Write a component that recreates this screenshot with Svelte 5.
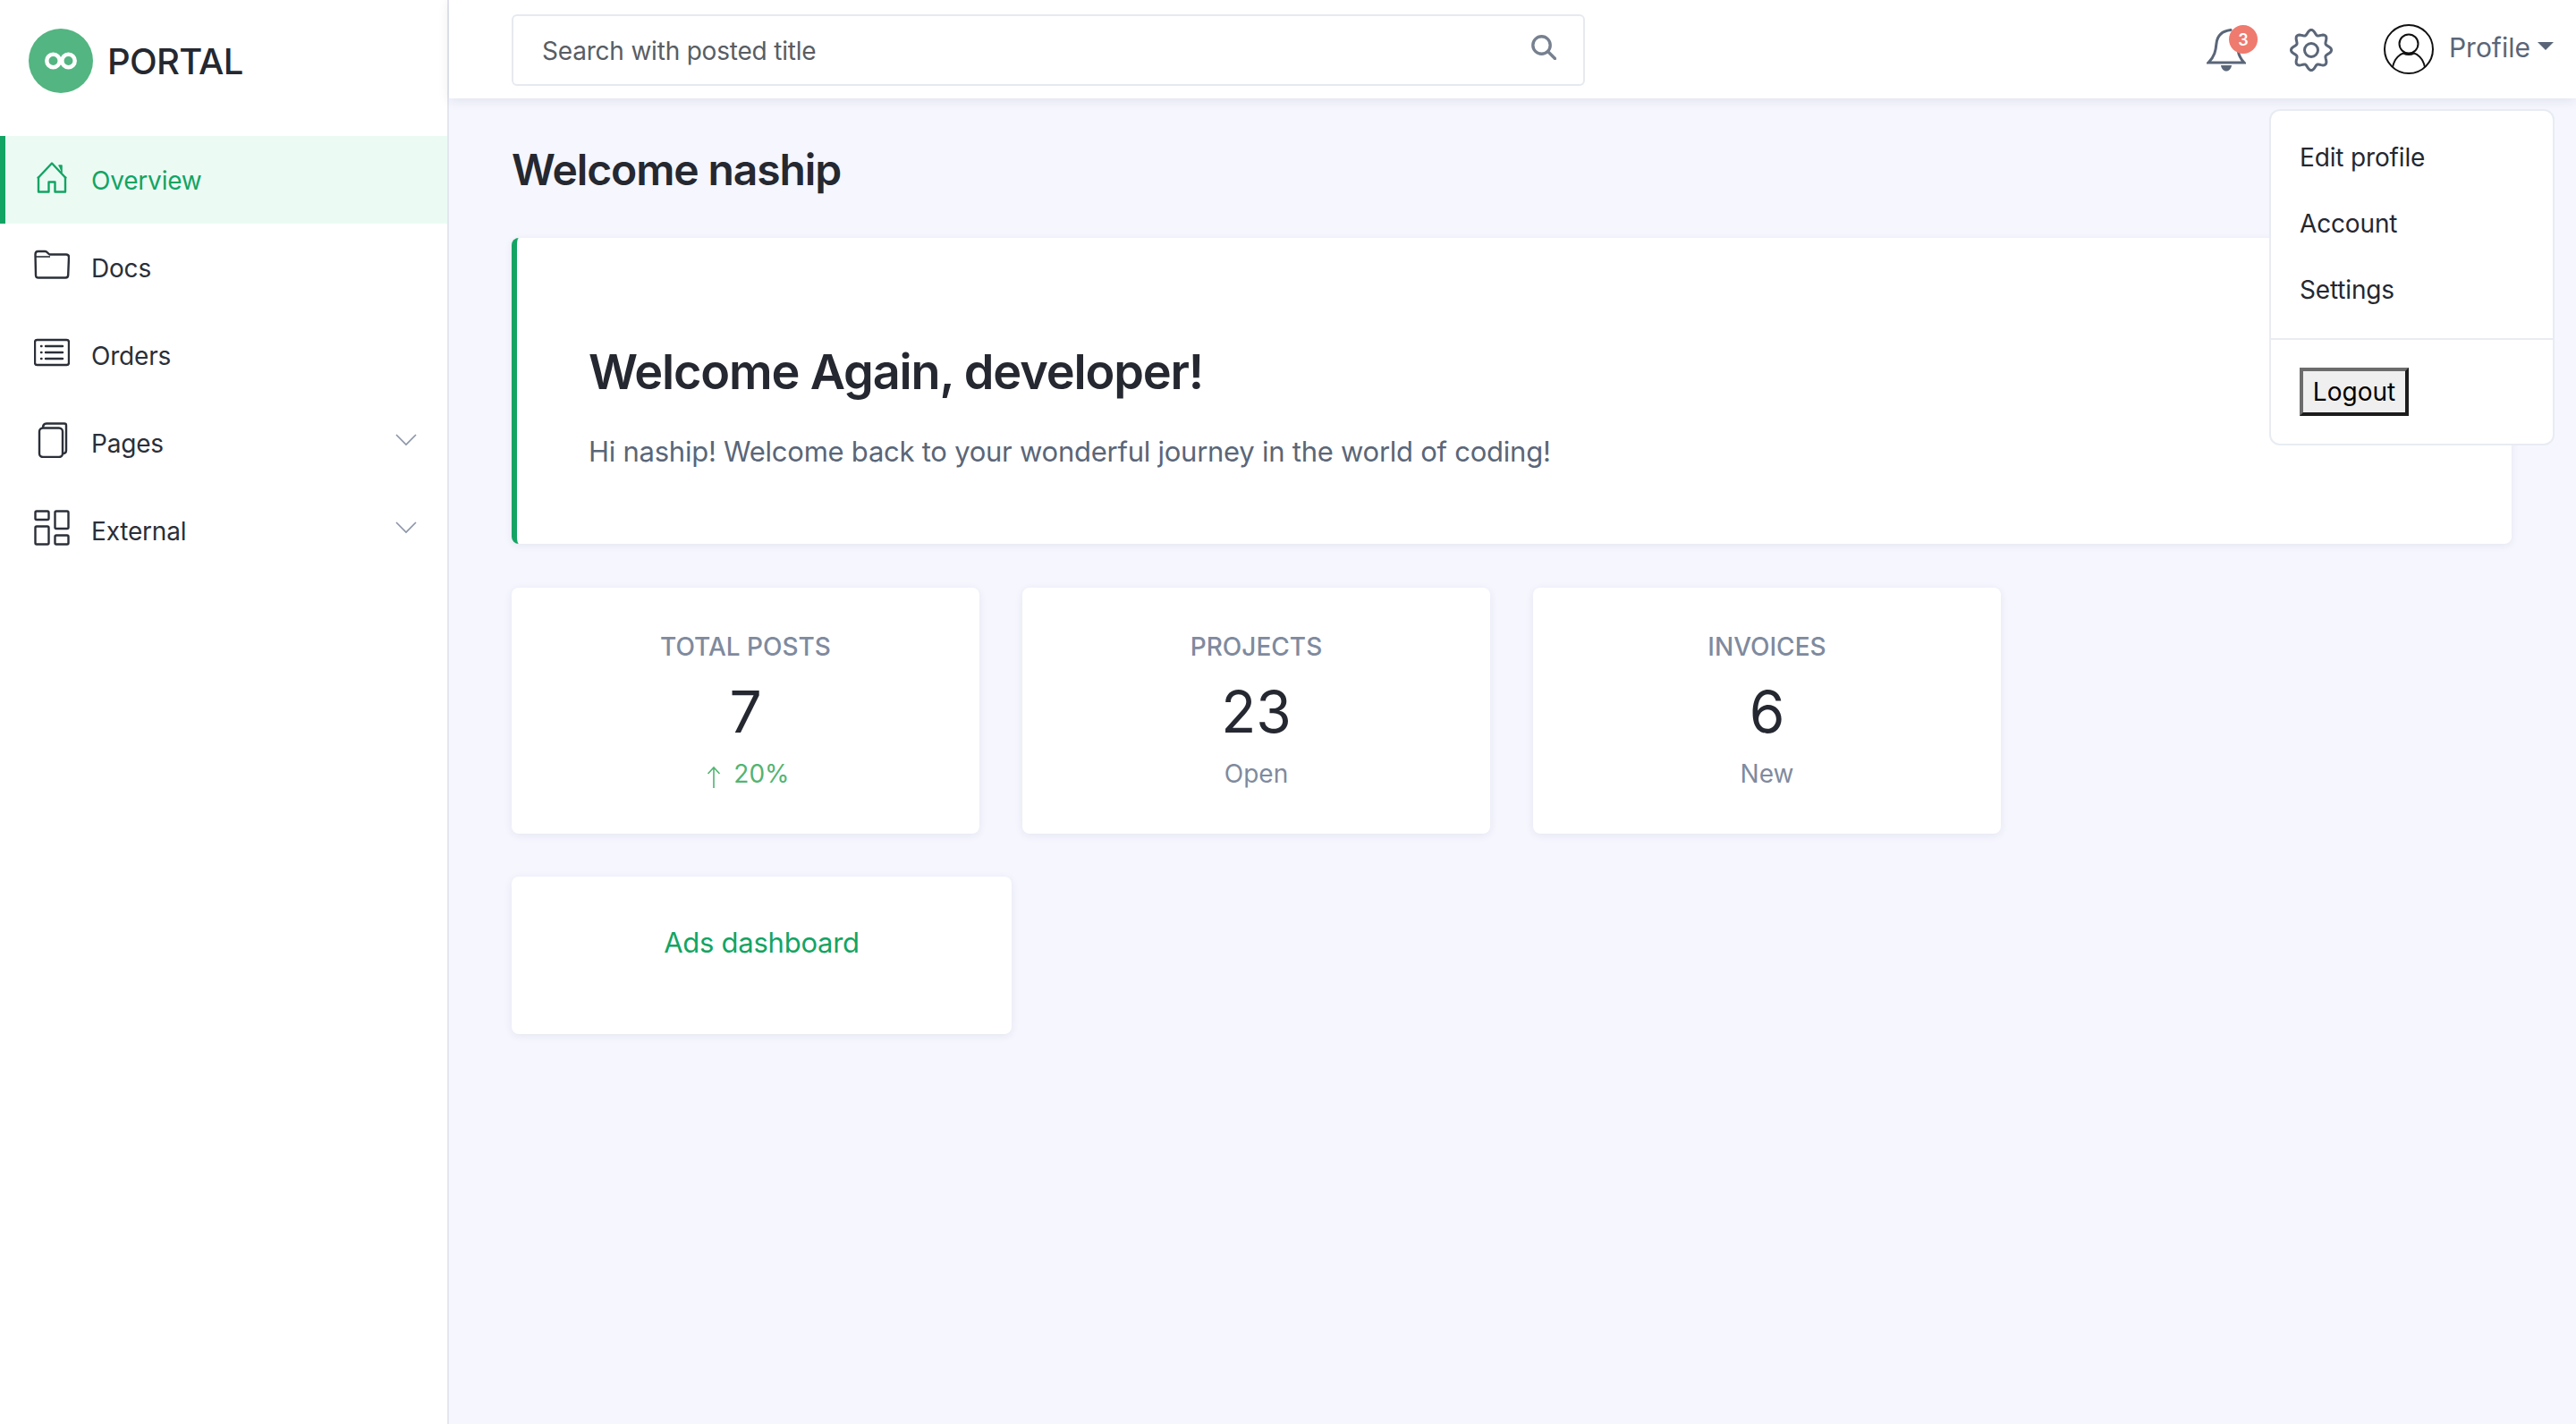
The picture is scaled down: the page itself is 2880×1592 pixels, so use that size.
<script lang="ts">
    const navItems = [
        { label: "Overview", icon: "home", active: true },
        { label: "Docs", icon: "folder" },
        { label: "Orders", icon: "list" },
        { label: "Pages", icon: "pages", caret: true },
        { label: "External", icon: "grid", caret: true },
    ];

    const stats = [
        { title: "TOTAL POSTS", value: "7", note: "20%", up: true },
        { title: "PROJECTS", value: "23", note: "Open" },
        { title: "INVOICES", value: "6", note: "New" },
    ];

    const menuItems = ["Edit profile", "Account", "Settings"];

    // scalloped outline of the settings gear, eight lobes with one on top
    function gearPath(cx: number, cy: number, mid: number, depth: number): string {
        const points: string[] = [];
        for (let i = 0; i < 96; i++) {
            const angle = (i / 96) * Math.PI * 2;
            const r = mid + depth * Math.cos(angle * 8);
            const x = cx + r * Math.sin(angle);
            const y = cy - r * Math.cos(angle);
            points.push(`${x.toFixed(2)} ${y.toFixed(2)}`);
        }
        return `M${points.join("L")}Z`;
    }
</script>

<div class="layout">
    <aside class="sidebar">
        <div class="brand">
            <span class="logo">
                <svg viewBox="0 0 36 22" width="36" height="22" fill="none" stroke="#fff" stroke-width="4.5">
                    <circle cx="9.5" cy="11" r="7.2" />
                    <circle cx="26.5" cy="11" r="7.2" />
                </svg>
            </span>
            <span class="brand-name">PORTAL</span>
        </div>
        <nav class="nav">
            {#each navItems as item}
                <div class="nav-item" class:active={item.active}>
                    <span class="nav-icon">
                        {#if item.icon === "home"}
                            <svg viewBox="0 0 40 40" width="40" height="40" fill="none" stroke="currentColor" stroke-width="2.4" stroke-linejoin="round">
                                <path d="M4 21.5 20 4.5l16 17" />
                                <path d="M5 19.5V36.5h11.5V25.5h7v11H35V19.5" />
                                <path d="M27.500 7h3.500v8" fill="currentColor" stroke-width="1.500" />
                            </svg>
                        {:else if item.icon === "folder"}
                            <svg viewBox="0 0 40 40" width="40" height="40" fill="none" stroke="currentColor" stroke-width="2.4" stroke-linejoin="round">
                                <path d="M1.5 8.5c0-2.500 1-3.500 3-3.500h8c2 0 3 2.500 5 3.500h18.500c2 0 3 1 3 3l-.8 20c0 2-1 3-3 3H5c-2 0-3-1-3-3Z" />
                                <path d="M2 11h16" stroke-width="1.6" />
                            </svg>
                        {:else if item.icon === "list"}
                            <svg viewBox="0 0 40 40" width="40" height="40" fill="none" stroke="currentColor" stroke-width="2.4" stroke-linecap="round">
                                <rect x="1" y="6" width="38" height="28" rx="2.500" />
                                <path d="M13 13h19M13 20h19M13 27h19" />
                                <path d="M8 13h.5M8 20h.5M8 27h.5" />
                            </svg>
                        {:else if item.icon === "pages"}
                            <svg viewBox="0 0 40 40" width="40" height="40" fill="none" stroke="currentColor" stroke-width="2.4" stroke-linejoin="round">
                                <rect x="6" y="6.500" width="26" height="32.500" rx="4" />
                                <path d="M10 6.500C10 3 11 1.500 14 1.500h20c1.500 0 2 .7 2 2v28c0 2-1 3.500-4 3.500" />
                            </svg>
                        {:else}
                            <svg viewBox="0 0 40 40" width="40" height="40" fill="none" stroke="currentColor" stroke-width="2.4">
                                <rect x="1.500" y="1.500" width="15" height="9.500" rx="1.500" />
                                <rect x="23.500" y="1.500" width="15" height="19.500" rx="1.500" />
                                <rect x="1.500" y="18.500" width="15" height="20" rx="1.500" />
                                <rect x="23.500" y="28.500" width="15" height="10" rx="1.500" />
                            </svg>
                        {/if}
                    </span>
                    <span class="nav-label">{item.label}</span>
                    {#if item.caret}
                        <svg class="caret" viewBox="0 0 24 14" width="24" height="14" fill="none" stroke="#8a94a6" stroke-width="1.6">
                            <path d="M1 1l11 11L23 1" />
                        </svg>
                    {/if}
                </div>
            {/each}
        </nav>
    </aside>

    <div class="main">
        <header class="topbar">
            <div class="search">
                <span class="search-text">Search with posted title</span>
                <svg class="search-icon" viewBox="0 0 28 28" width="28" height="28" fill="none" stroke="#76808f" stroke-width="3.4">
                    <circle cx="11.500" cy="11.500" r="9.700" />
                    <path d="M18.500 18.500l8 8" stroke-linecap="round" />
                </svg>
            </div>
            <div class="top-actions">
                <span class="bell">
                    <svg viewBox="0 0 44 50" width="44" height="50" fill="none" stroke="#5a6678" stroke-width="3" stroke-linecap="round">
                        <path d="M27 3.500c-9 1-15 6-16 15-.8 8-2 15-9 21.500h40c-4-4-6-8-7-14" />
                        <path d="M16 43h12c-.6 4-3 6.500-6 6.500s-5.400-2.500-6-6.500Z" fill="#5a6678" stroke="none" />
                    </svg>
                    <span class="badge">3</span>
                </span>
                <svg class="gear" viewBox="0 0 48 48" width="48" height="48" fill="none" stroke="#5a6678" stroke-width="3" stroke-linejoin="round">
                    <circle cx="24" cy="24" r="7.500" />
                    <path d={gearPath(24, 24, 20, 2.600)} />
                </svg>
                <div class="profile">
                    <svg viewBox="0 0 56 56" width="56" height="56" fill="none" stroke="#111" stroke-width="2">
                        <circle cx="28" cy="28" r="27" />
                        <circle cx="28" cy="22" r="10.500" />
                        <path d="M10 48c2-10 9-15 12-15.500M46 48c-2-10-9-15-12-15.500M22 32.500c4 2 8 2 12 0" />
                    </svg>
                    <span class="profile-name">Profile</span>
                    <span class="profile-caret"></span>
                </div>
            </div>
        </header>

        <main class="content">
            <h1>Welcome naship</h1>

            <section class="hero">
                <h2>Welcome Again, developer!</h2>
                <p>Hi naship! Welcome back to your wonderful journey in the world of coding!</p>
            </section>

            <div class="stats">
                {#each stats as stat}
                    <div class="card stat">
                        <div class="stat-title">{stat.title}</div>
                        <div class="stat-value">{stat.value}</div>
                        <div class="stat-note" class:up={stat.up}>
                            {#if stat.up}
                                <svg viewBox="0 0 16 26" width="16" height="26" fill="none" stroke="currentColor" stroke-width="1.600">
                                    <path d="M8 25V2M1.500 9 8 2l6.500 7" />
                                </svg>
                            {/if}
                            {stat.note}
                        </div>
                    </div>
                {/each}
            </div>

            <div class="card ads">
                <span>Ads dashboard</span>
            </div>
        </main>

        <div class="dropdown">
            <div class="menu-list">
                {#each menuItems as entry}
                    <div class="menu-item">{entry}</div>
                {/each}
            </div>
            <div class="menu-footer">
                <button class="logout">Logout</button>
            </div>
        </div>
    </div>
</div>

<style>
    :global(body) {
        margin: 0;
        background: #f5f6fe;
        font-family: Inter, "Liberation Sans", sans-serif;
        color: #252830;
    }

    .layout {
        display: grid;
        grid-template-columns: 502px 1fr;
        width: 2880px;
        height: 1592px;
        overflow: hidden;
    }

    .sidebar {
        box-sizing: border-box;
        background: #fff;
        border-right: 2px solid #e3e6ef;
    }

    .brand {
        display: flex;
        align-items: center;
        gap: 16px;
        padding: 32px 32px 0;
        height: 72px;
    }

    .logo {
        width: 72px;
        height: 72px;
        border-radius: 50%;
        background: #53b581;
        display: flex;
        align-items: center;
        justify-content: center;
    }

    .brand-name {
        font-size: 40px;
        font-weight: 500;
        letter-spacing: -0.7px;
    }

    .nav {
        margin-top: 48px;
    }

    .nav-item {
        display: flex;
        align-items: center;
        height: 98px;
        padding: 0 34px 0 38px;
        font-size: 28px;
        letter-spacing: -0.2px;
        color: #2b2f38;
    }

    .nav-item.active {
        background: #ebfbf4;
        color: #13a463;
        border-left: 6px solid #13a463;
        padding-left: 32px;
    }

    .nav-icon {
        display: flex;
        width: 40px;
        height: 40px;
        margin-top: -6px;
        margin-right: 24px;
    }

    .nav-label {
        flex: 1;
        padding-top: 2px;
    }

    .caret {
        margin-top: -6px;
    }

    .main {
        position: relative;
        min-width: 0;
    }

    .topbar {
        display: flex;
        align-items: center;
        justify-content: space-between;
        height: 110px;
        background: #fff;
        box-shadow: 0 2px 12px rgba(40, 50, 80, 0.1);
        padding: 0 25px 0 70px;
        position: relative;
    }

    .search {
        display: flex;
        align-items: center;
        justify-content: space-between;
        box-sizing: border-box;
        width: 1200px;
        height: 80px;
        margin-top: 2px;
        border: 2px solid #e6e9ef;
        border-radius: 6px;
        padding: 0 30px 0 32px;
    }

    .search-text {
        font-size: 28px;
        letter-spacing: -0.2px;
        padding-top: 2px;
        color: #595d63;
    }

    .search-icon {
        margin-top: -6px;
    }

    .top-actions {
        display: flex;
        align-items: center;
    }

    .bell {
        position: relative;
        display: flex;
        margin-right: 49px;
    }

    .badge {
        position: absolute;
        top: -2px;
        left: 25px;
        width: 32px;
        height: 32px;
        border-radius: 50%;
        background: #ef7a6e;
        color: #fff;
        font-size: 18px;
        font-weight: 600;
        display: flex;
        align-items: center;
        justify-content: center;
    }

    .gear {
        margin-right: 57px;
        margin-top: 2px;
    }

    .profile {
        display: flex;
        align-items: center;
        color: #5a6678;
        font-size: 30px;
    }

    .profile-name {
        margin-left: 17px;
        margin-top: -4px;
    }

    .profile-caret {
        width: 0;
        height: 0;
        margin-left: 8px;
        margin-top: -8px;
        border-left: 9px solid transparent;
        border-right: 9px solid transparent;
        border-top: 9px solid #5a6678;
    }

    .content {
        padding: 51px 72px 0 70px;
    }

    h1 {
        margin: 0;
        font-size: 48px;
        line-height: 58px;
        font-weight: 600;
        letter-spacing: -1.1px;
    }

    .hero {
        box-sizing: border-box;
        height: 342px;
        margin-top: 47px;
        padding: 116px 0 0 80px;
        background: #fff;
        border-left: 6px solid #13a463;
        border-radius: 8px;
        box-shadow: 0 2px 8px rgba(40, 50, 80, 0.08);
    }

    h2 {
        margin: 0;
        font-size: 54px;
        line-height: 68px;
        font-weight: 600;
        letter-spacing: -1.15px;
    }

    .hero p {
        margin: 35px 0 0;
        font-size: 31px;
        line-height: 40px;
        letter-spacing: -0.25px;
        color: #5a6678;
    }

    .stats {
        display: flex;
        gap: 48px;
        margin-top: 49px;
    }

    .card {
        background: #fff;
        border-radius: 8px;
        box-shadow: 0 2px 10px rgba(40, 50, 80, 0.08);
    }

    .stat {
        box-sizing: border-box;
        width: 523px;
        height: 275px;
        padding-top: 49px;
        text-align: center;
    }

    .stat-title {
        font-size: 28px;
        line-height: 34px;
        font-weight: 500;
        color: #7f8a9e;
    }

    .stat-value {
        font-size: 64px;
        line-height: 78px;
        margin-top: 17px;
    }

    .stat-note {
        font-size: 28px;
        line-height: 34px;
        margin-top: 13px;
        color: #7f8a9e;
    }

    .stat-note.up {
        color: #52b472;
        padding-left: 6px;
    }

    .stat-note svg {
        vertical-align: -7px;
        margin-right: 6px;
    }

    .ads {
        box-sizing: border-box;
        width: 559px;
        height: 176px;
        margin-top: 48px;
        padding-top: 54px;
        text-align: center;
        font-size: 31px;
        line-height: 40px;
        letter-spacing: -0.25px;
        color: #13a463;
    }

    .dropdown {
        position: absolute;
        top: 122px;
        right: 24px;
        box-sizing: border-box;
        width: 319px;
        height: 376px;
        background: #fff;
        border: 2px solid #e8ecf2;
        border-radius: 12px;
    }

    .menu-list {
        padding: 15px 0 17px;
        border-bottom: 2px solid #e8ecf2;
    }

    .menu-item {
        font-size: 28px;
        line-height: 74px;
        letter-spacing: -0.15px;
        padding-left: 32px;
    }

    .menu-footer {
        padding: 31px 32px;
    }

    .logout {
        box-sizing: border-box;
        width: 122px;
        height: 54px;
        padding: 0;
        font-family: inherit;
        font-size: 28px;
        color: #000;
        background: #efefef;
        border-width: 4px;
        border-style: solid;
        border-color: #6c6c6c #1c1c1c #1c1c1c #6c6c6c;
    }
</style>
